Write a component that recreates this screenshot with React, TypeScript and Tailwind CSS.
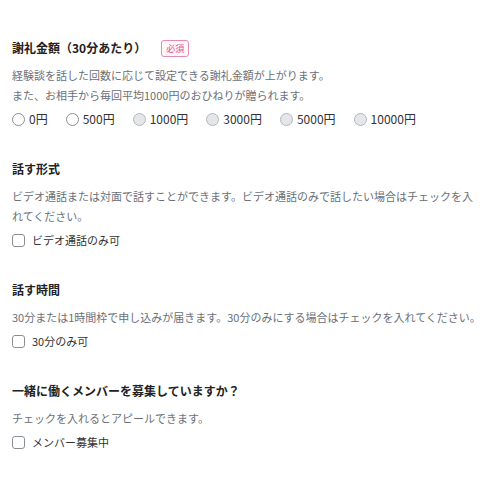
const font = { fontFamily: '"Noto Sans CJK JP", "Noto Sans", sans-serif' };

const amounts = [
  { label: '0円', disabled: false },
  { label: '500円', disabled: false },
  { label: '1000円', disabled: true },
  { label: '3000円', disabled: true },
  { label: '5000円', disabled: true },
  { label: '10000円', disabled: true },
];

function Heading({ children }: { children: React.ReactNode }) {
  return <h3 className="text-[12px] leading-5 font-bold text-[#222]">{children}</h3>;
}

function Desc({ children }: { children: React.ReactNode }) {
  return <p className="mt-[7px] max-w-[470px] text-[11px] leading-5 text-[#6b7078]">{children}</p>;
}

function Check({ label }: { label: string }) {
  return (
    <label className="mt-[4px] flex h-5 items-center gap-[7px]">
      <span className="h-[13px] w-[13px] rounded-[3px] border border-[#8a8f96] bg-white" />
      <span className="text-[11px] text-[#333]">{label}</span>
    </label>
  );
}

export default function App() {
  return (
    <div className="min-h-[500px] bg-white px-3 pt-[38px]" style={font}>
      <div className="flex flex-col gap-[30px]">
        <section>
          <div className="flex items-center">
            <Heading>謝礼金額（30分あたり）</Heading>
            <span className="ml-[15px] rounded-[3px] border border-[#e88ab0] bg-[#fff7fa] px-[4px] text-[9px] leading-[15px] text-[#e0538d]">
              必須
            </span>
          </div>
          <Desc>
            経験談を話した回数に応じて設定できる謝礼金額が上がります。
            <br />
            また、お相手から毎回平均1000円のおひねりが贈られます。
          </Desc>
          <div className="mt-[4px] flex h-5 items-center gap-[18px]">
            {amounts.map((a) => (
              <label key={a.label} className="flex items-center gap-[4px]">
                <span
                  className={
                    a.disabled
                      ? 'h-[13px] w-[13px] rounded-full border border-[#b3b7bd] bg-[#e4e6e9]'
                      : 'h-[13px] w-[13px] rounded-full border border-[#8a8f96] bg-white'
                  }
                />
                <span className="text-[12px] text-[#333]">{a.label}</span>
              </label>
            ))}
          </div>
        </section>

        <section>
          <Heading>話す形式</Heading>
          <Desc>ビデオ通話または対面で話すことができます。ビデオ通話のみで話したい場合はチェックを入れてください。</Desc>
          <Check label="ビデオ通話のみ可" />
        </section>

        <section>
          <Heading>話す時間</Heading>
          <Desc>30分または1時間枠で申し込みが届きます。30分のみにする場合はチェックを入れてください。</Desc>
          <Check label="30分のみ可" />
        </section>

        <section>
          <Heading>一緒に働くメンバーを募集していますか？</Heading>
          <Desc>チェックを入れるとアピールできます。</Desc>
          <Check label="メンバー募集中" />
        </section>
      </div>
    </div>
  );
}
